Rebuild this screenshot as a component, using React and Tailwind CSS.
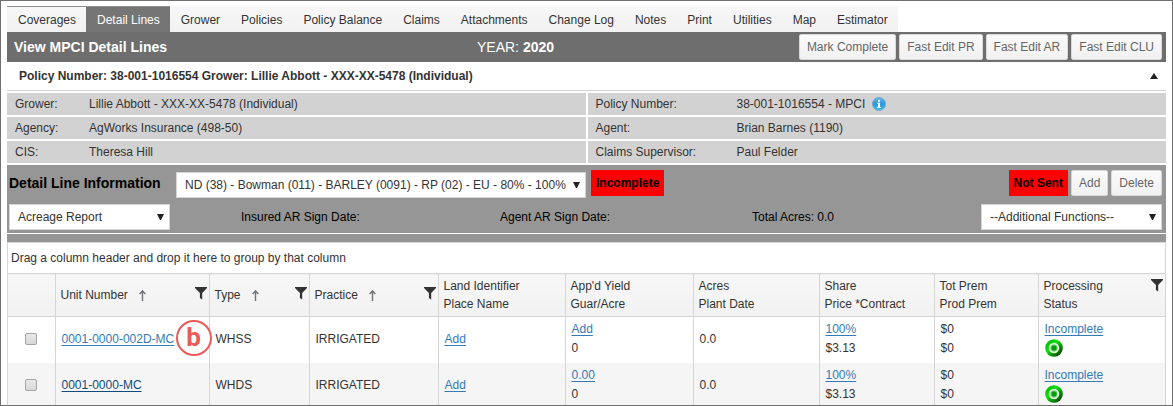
import { useState } from 'react'

const tabs = [
  'Coverages',
  'Detail Lines',
  'Grower',
  'Policies',
  'Policy Balance',
  'Claims',
  'Attachments',
  'Change Log',
  'Notes',
  'Print',
  'Utilities',
  'Map',
  'Estimator',
]

const policyInfo = [
  { label: 'Grower:', value: 'Lillie Abbott - XXX-XX-5478 (Individual)', label2: 'Policy Number:', value2: '38-001-1016554 - MPCI', info: true },
  { label: 'Agency:', value: 'AgWorks Insurance (498-50)', label2: 'Agent:', value2: 'Brian Barnes (1190)' },
  { label: 'CIS:', value: 'Theresa Hill', label2: 'Claims Supervisor:', value2: 'Paul Felder' },
]

const columns = [
  { lines: ['Unit Number'], sort: true, filter: true },
  { lines: ['Type'], sort: true, filter: true },
  { lines: ['Practice'], sort: true, filter: true },
  { lines: ['Land Identifier', 'Place Name'] },
  { lines: ["App'd Yield", 'Guar/Acre'] },
  { lines: ['Acres', 'Plant Date'] },
  { lines: ['Share', 'Price *Contract'] },
  { lines: ['Tot Prem', 'Prod Prem'] },
  { lines: ['Processing', 'Status'], filter: true },
]

const rows = [
  { unit: '0001-0000-002D-MC', type: 'WHSS', practice: 'IRRIGATED', yield: 'Add', marker: 'b' },
  { unit: '0001-0000-MC', type: 'WHDS', practice: 'IRRIGATED', yield: '0.00', visited: true },
]

function FilterIcon() {
  return (
    <svg width="12" height="13" viewBox="0 0 12 13" fill="#333" className="block">
      <path d="M0 0h12v1L7.2 6V12.5L4.9 11V6L0 1z" />
    </svg>
  )
}

function SortIcon() {
  return (
    <svg width="7" height="11" viewBox="0 0 7 11" fill="none" stroke="#707078" className="block">
      <path d="M3.5 11V1" strokeWidth="1.4" />
      <path d="M0.6 4L3.5 1L6.4 4" strokeWidth="1.5" />
    </svg>
  )
}

function InfoIcon() {
  return (
    <svg width="14" height="14" viewBox="0 0 14 14" className="block">
      <defs>
        <linearGradient id="info" x1="0" y1="0" x2="0" y2="1">
          <stop offset="0" stopColor="#6cb8e6" />
          <stop offset="0.5" stopColor="#2f95d8" />
          <stop offset="1" stopColor="#45c0f0" />
        </linearGradient>
      </defs>
      <circle cx="7" cy="7" r="6.5" fill="url(#info)" stroke="#5aa7d6" strokeWidth="0.8" />
      <rect x="6" y="3" width="2" height="1.8" fill="#fff" />
      <path d="M5.3 5.8H8V10h0.8v0.9H5.2V10H6V6.7H5.3z" fill="#fff" />
    </svg>
  )
}

function StatusIcon() {
  return (
    <svg width="18" height="18" viewBox="0 0 18 18" className="block">
      <defs>
        <linearGradient id="ball" x1="0" y1="0" x2="1" y2="1">
          <stop offset="0.1" stopColor="#0b0" />
          <stop offset="0.4" stopColor="#0ee00e" />
          <stop offset="0.9" stopColor="#033f03" />
        </linearGradient>
      </defs>
      <circle cx="9" cy="9" r="8.8" fill="url(#ball)" />
      <circle cx="9" cy="9" r="4.5" fill="#8fdc8f" stroke="#e6f8e6" strokeWidth="1.4" />
      <circle cx="9" cy="9" r="2.7" fill="#0a9a0a" />
    </svg>
  )
}

function Button({ children }) {
  return (
    <button className="h-[26px] px-[7px] rounded-xs border border-[#d9d9d9] bg-linear-to-b from-[#fafafa] to-[#f1f1f1] text-[#666] whitespace-nowrap">
      {children}
    </button>
  )
}

function Select({ label, option, className }) {
  return (
    <div className={`relative ${className}`}>
      <select
        aria-label={label}
        className="block appearance-none w-full h-[26px] pl-2 pr-4 bg-white border border-[#d5d5d5] text-[#333]"
      >
        <option>{option}</option>
      </select>
      <svg width="7" height="6" viewBox="0 0 7 6" fill="#222" className="absolute right-[6px] top-[10px] pointer-events-none">
        <path d="M0 0h7L4 6H3z" />
      </svg>
    </div>
  )
}

function Link({ children, visited }) {
  return (
    <a href="#" className={`underline underline-offset-2 ${visited ? 'text-[#124a7c]' : 'text-[#337ab7]'}`}>
      {children}
    </a>
  )
}

export default function App() {
  const [active, setActive] = useState('Detail Lines')
  const [open, setOpen] = useState(true)

  return (
    <div className="h-screen overflow-hidden border border-[#707070] bg-white pl-[6px] pr-[6px] pt-[5px] text-xs text-[#333] font-['Liberation_Sans',Arial,sans-serif]">
      {/* Tabs */}
      <nav className="flex w-fit bg-linear-to-b from-[#f7f7f7] to-[#f2f2f2]">
        {tabs.map((tab, i) => (
          <button
            key={tab}
            onClick={() => setActive(tab)}
            className={`h-[26px] pl-[11px] pr-[10px] border-t whitespace-nowrap ${
              active === tab
                ? 'bg-[#757575] border-[#8f8f8f] text-white'
                : i === 0
                ? 'border-[#8f8f8f]'
                : 'border-transparent'
            }`}
          >
            {tab}
          </button>
        ))}
      </nav>

      {/* Title bar */}
      <div className="flex items-center h-[30px] bg-[#6e6e6e] text-white text-sm pl-[7px] pr-1">
        <h1 className="w-[463px] font-bold">View MPCI Detail Lines</h1>
        <div>
          YEAR: <b>2020</b>
        </div>
        <div className="flex flex-1 justify-end gap-[3px] text-xs">
          <Button>Mark Complete</Button>
          <Button>Fast Edit PR</Button>
          <Button>Fast Edit AR</Button>
          <Button>Fast Edit CLU</Button>
        </div>
      </div>

      {/* Policy summary */}
      <button
        onClick={() => setOpen(!open)}
        className="flex w-full items-center justify-between h-[29px] pl-3 pr-2 border-b border-[#d5d5d5] font-bold"
      >
        <span>Policy Number: 38-001-1016554 Grower: Lillie Abbott - XXX-XX-5478 (Individual)</span>
        <svg width="8" height="6" viewBox="0 0 8 6" fill="#222">
          <path d="M4 0L8 6H0z" />
        </svg>
      </button>
      {open && (
        <div className="py-[2px] space-y-[2px]">
          {policyInfo.map(item => (
            <dl key={item.label} className="grid grid-cols-2 gap-[2px]">
              <div className="flex items-center h-[22px] px-2 bg-[#d2d2d2]">
                <dt className="w-[74px]">{item.label}</dt>
                <dd>{item.value}</dd>
              </div>
              <div className="flex items-center h-[22px] px-2 bg-[#d2d2d2]">
                <dt className="w-[141px]">{item.label2}</dt>
                <dd className="flex items-center gap-[7px]">
                  {item.value2}
                  {item.info && <InfoIcon />}
                </dd>
              </div>
            </dl>
          ))}
        </div>
      )}

      {/* Detail line toolbar */}
      <div className="bg-[#969696] text-black pl-[2px] pr-1 pt-[5px] pb-[3px] border-b border-white">
        <div className="flex h-7">
          <h2 className="w-[167px] leading-[26px] text-sm font-bold whitespace-nowrap">Detail Line Information</h2>
          <Select
            label="Detail line"
            option="ND (38) - Bowman (011) - BARLEY (0091) - RP (02) - EU - 80% - 100%"
            className="w-[410px] self-end"
          />
          <span className="ml-[5px] h-[26px] leading-[26px] px-[5px] bg-[#f00] font-bold">Incomplete</span>
          <div className="flex flex-1 justify-end gap-[3px]">
            <span className="h-[26px] leading-[26px] px-[5px] bg-[#f00] font-bold">Not Sent</span>
            <Button>Add</Button>
            <Button>Delete</Button>
          </div>
        </div>
        <div className="flex items-center mt-[6px]">
          <Select label="Report" option="Acreage Report" className="w-[161px]" />
          <div className="w-[259px] pl-[71px]">Insured AR Sign Date:</div>
          <div className="w-[252px] pl-[71px]">Agent AR Sign Date:</div>
          <div className="flex-1 pl-[71px]">Total Acres: 0.0</div>
          <Select label="Additional functions" option="--Additional Functions--" className="w-[181px]" />
        </div>
      </div>
      <div className="h-2 bg-[#969696]"></div>

      {/* Grid */}
      <div className="border border-b-0 border-[#d5d5d5]">
        <div className="h-[30px] leading-[30px] pl-[3px]">Drag a column header and drop it here to group by that column</div>
        <table className="w-full table-fixed border-collapse">
          <colgroup>
            <col className="w-[47px]" />
            <col className="w-[154px]" />
            <col className="w-[100px]" />
            <col className="w-[129px]" />
            <col className="w-[127px]" />
            <col className="w-[128px]" />
            <col className="w-[126px]" />
            <col className="w-[115px]" />
            <col className="w-[104px]" />
            <col />
          </colgroup>
          <thead>
            <tr className="h-[43px] bg-linear-to-b from-[#f7f7f7] to-[#f2f2f2] border-y border-[#d5d5d5]">
              <th className="border-r border-[#d5d5d5]"></th>
              {columns.map(col => (
                <th key={col.lines[0]} className="p-0 pl-[5px] border-r last:border-r-0 border-[#d5d5d5] text-left font-normal">
                  <div className="flex items-center">
                    <div className="leading-[18px]">
                      {col.lines.map(line => (
                        <div key={line}>{line}</div>
                      ))}
                    </div>
                    {col.sort && (
                      <span className="ml-[11px]">
                        <SortIcon />
                      </span>
                    )}
                    {col.filter && (
                      <button aria-label={`Filter ${col.lines[0]}`} className={`ml-auto mr-[2px] ${col.sort ? 'pb-1' : 'self-start pt-[2px]'}`}>
                        <FilterIcon />
                      </button>
                    )}
                  </div>
                </th>
              ))}
            </tr>
          </thead>
          <tbody>
            {rows.map(row => (
              <tr key={row.unit} className="h-[46px] even:bg-[#f5f5f5] *:border-r *:last:border-r-0 *:border-[#d5d5d5] *:pt-0 *:pr-0 *:pb-px *:not-first:pl-[6px] leading-[19px]">
                <td>
                  <input
                    type="checkbox"
                    aria-label={`Select ${row.unit}`}
                    className="block mx-auto size-3 appearance-none rounded-xs border border-[#a5a5a5] bg-linear-to-b from-[#e8e8e8] to-[#d8d8d8] checked:bg-[#337ab7]"
                  />
                </td>
                <td>
                  <div className="relative">
                    <Link visited={row.visited}>{row.unit}</Link>
                    {row.marker && (
                      <span className="absolute -right-[3px] -top-[10px] size-9 rounded-full border-2 border-[#ea5a59] bg-white text-[#ea5a59] text-[26px] leading-[31px] text-center font-bold font-[Roboto,sans-serif]">
                        {row.marker}
                      </span>
                    )}
                  </div>
                </td>
                <td>{row.type}</td>
                <td>{row.practice}</td>
                <td>
                  <Link>Add</Link>
                </td>
                <td>
                  <Link>{row.yield}</Link>
                  <div>0</div>
                </td>
                <td>0.0</td>
                <td>
                  <Link>100%</Link>
                  <div>$3.13</div>
                </td>
                <td>
                  <div>$0</div>
                  <div>$0</div>
                </td>
                <td>
                  <Link>Incomplete</Link>
                  <div className="h-[19px]">
                    <StatusIcon />
                  </div>
                </td>
              </tr>
            ))}
          </tbody>
        </table>
      </div>
    </div>
  )
}
